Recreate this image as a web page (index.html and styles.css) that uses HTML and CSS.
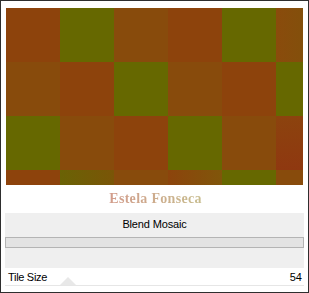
FILE: index.html
```html
<!DOCTYPE html>
<html>
<head>
<meta charset="utf-8">
<link rel="stylesheet" href="styles.css">
</head>
<body>
<div class="frame">
  <div class="mosaic">
    <div class="t o"></div><div class="t g"></div><div class="t b"></div><div class="t o"></div><div class="t g"></div><div class="t b2"></div>
    <div class="t b"></div><div class="t o"></div><div class="t g"></div><div class="t b"></div><div class="t o"></div><div class="t g"></div>
    <div class="t g"></div><div class="t b"></div><div class="t o"></div><div class="t g"></div><div class="t b"></div><div class="t r"></div>
    <div class="t o"></div><div class="t gb"></div><div class="t b"></div><div class="t ob"></div><div class="t g"></div><div class="t b"></div>
  </div>
  <div class="title"><span class="title-text">Estela Fonseca</span></div>
  <div class="panel">
    <div class="panel-title">Blend Mosaic</div>
    <div class="track"></div>
  </div>
  <div class="param">
    <span class="label">Tile Size</span>
    <span class="value">54</span>
    <div class="thumb"></div>
  </div>
</div>
</body>
</html>
```
FILE: styles.css
```css
html, body { margin: 0; padding: 0; background: #fff; }
.frame {
  width: 309px; height: 293px; box-sizing: border-box;
  border: 1px solid #2e2e2e;
  background: #fff;
  overflow: hidden;
  font-family: "Liberation Sans", Arial, sans-serif;
}
.mosaic {
  margin: 7px 0 0 5px;
  width: 297px; height: 177px;
  display: grid;
  grid-template-columns: repeat(6, 54px);
  grid-auto-rows: 54px;
  overflow: hidden;
}
.t.o { background: #8d430c; }
.t.g { background: #666800; }
.t.b { background: #884b0c; }
.t.b2 { background: linear-gradient(90deg, #8a4b0c, #7c540a); }
.t.r { background: linear-gradient(180deg, #8c430e, #8f3810); }
.t.gb { background: linear-gradient(90deg, #6a6205, #7a5507); }
.t.ob { background: linear-gradient(90deg, #8c440c, #80560a); }
.title {
  height: 28px;
  display: flex; align-items: center; justify-content: center;
  padding-left: 2px;
}
.title-text {
  font-family: "Liberation Serif", "Times New Roman", serif;
  font-weight: bold; font-size: 14px;
  letter-spacing: 0.3px;
  background: linear-gradient(90deg, #d29c8b, #c8bd8f);
  -webkit-background-clip: text; background-clip: text;
  color: transparent;
}
.panel {
  margin-left: 4px; width: 299px; height: 55px;
  background: #efefef;
  box-sizing: border-box;
  padding-top: 4px;
}
.panel-title {
  text-align: center; font-size: 11px; letter-spacing: -0.15px; color: #000;
  height: 20px; line-height: 15px;
}
.track {
  height: 11px; box-sizing: border-box;
  border: 1px solid #b4b4b4;
  background: #e3e3e3;
}
.param {
  position: relative;
  margin-left: 4px; width: 299px; height: 18px;
  border-bottom: 1px solid #e6e6e6;
  display: flex; justify-content: space-between; align-items: center;
  padding: 0 2px 0 3px; box-sizing: border-box;
  font-size: 11px; color: #000;
}
.label { letter-spacing: -0.3px; }
.thumb {
  position: absolute; left: 55px; bottom: 0;
  width: 0; height: 0;
  border-left: 8px solid transparent; border-right: 8px solid transparent;
  border-bottom: 8px solid #e8e8e8;
}
```
